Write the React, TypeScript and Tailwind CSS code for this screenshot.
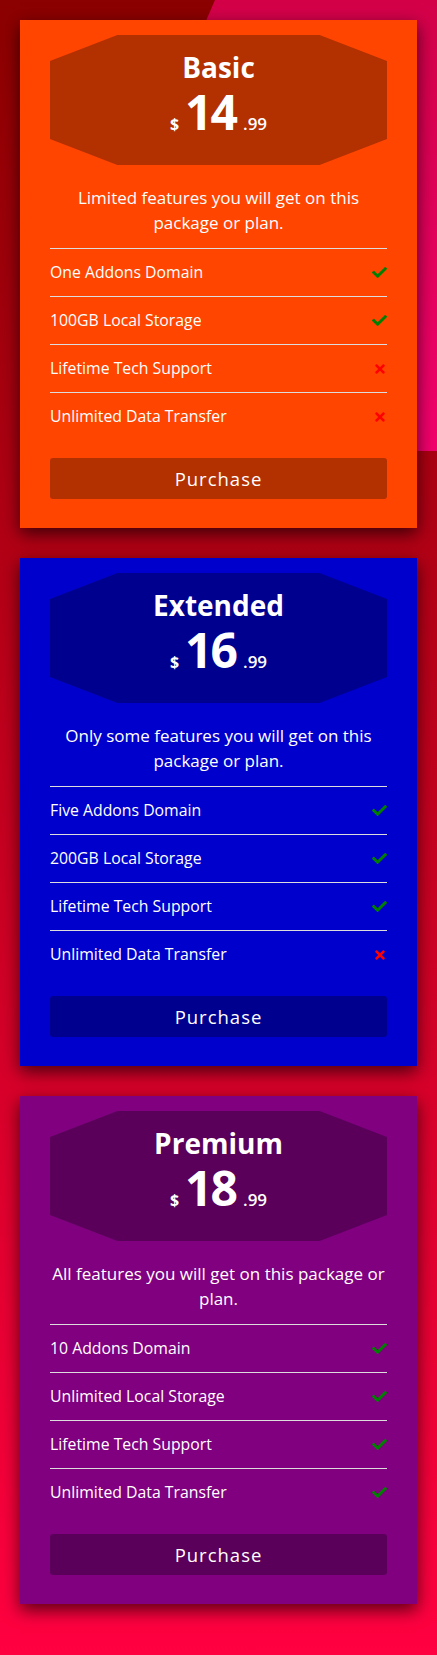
import { FaCheck, FaTimes } from 'react-icons/fa'

type Feature = { label: string; ok: boolean }

type Plan = {
  name: string
  price: string
  desc: string[]
  features: Feature[]
  card: string
  dark: string
}

const plans: Plan[] = [
  {
    name: 'Basic',
    price: '14',
    desc: ['Limited features you will get on this', 'package or plan.'],
    features: [
      { label: 'One Addons Domain', ok: true },
      { label: '100GB Local Storage', ok: true },
      { label: 'Lifetime Tech Support', ok: false },
      { label: 'Unlimited Data Transfer', ok: false },
    ],
    card: 'bg-[#ff4500]',
    dark: 'bg-[#b33000]',
  },
  {
    name: 'Extended',
    price: '16',
    desc: ['Only some features you will get on this', 'package or plan.'],
    features: [
      { label: 'Five Addons Domain', ok: true },
      { label: '200GB Local Storage', ok: true },
      { label: 'Lifetime Tech Support', ok: true },
      { label: 'Unlimited Data Transfer', ok: false },
    ],
    card: 'bg-[#0000cd]',
    dark: 'bg-[#00008f]',
  },
  {
    name: 'Premium',
    price: '18',
    desc: ['All features you will get on this package or', 'plan.'],
    features: [
      { label: '10 Addons Domain', ok: true },
      { label: 'Unlimited Local Storage', ok: true },
      { label: 'Lifetime Tech Support', ok: true },
      { label: 'Unlimited Data Transfer', ok: true },
    ],
    card: 'bg-[#800080]',
    dark: 'bg-[#5a005a]',
  },
]

const PlanCard = ({ plan }: { plan: Plan }) => {
  return (
    <div
      className={`${plan.card} relative px-[30px] pt-[15px] pb-[29px] text-white shadow-[0_6px_16px_rgba(0,0,0,0.65)]`}
    >
      <div
        className={`${plan.dark} h-[130px] pt-[15px] flex flex-col items-center [clip-path:polygon(20%_0,80%_0,100%_20%,100%_80%,80%_100%,20%_100%,0_80%,0_20%)]`}
      >
        <div className="text-[28px] leading-[34px] font-bold">{plan.name}</div>
        <div className="flex items-baseline h-[54px] pt-[2px] leading-[52px]">
          <span className="text-[16px] font-bold mr-[6px]">$</span>
          <span className="text-[48px] font-bold tracking-[-2px]">{plan.price}</span>
          <span className="text-[17px] font-semibold ml-[7px]">.99</span>
        </div>
      </div>

      <p className="mt-5 mb-[13px] text-center text-[17px] leading-[25px]">
        {plan.desc[0]}
        <br />
        {plan.desc[1]}
      </p>

      <ul className="flex flex-col">
        {plan.features.map((f, i) => (
          <li
            key={i}
            className="h-12 flex items-center justify-between border-t border-[#dddddd] text-[15.8px]"
          >
            <span>{f.label}</span>
            {f.ok ? (
              <FaCheck className="text-[#008000]" size={15} />
            ) : (
              <FaTimes className="text-[#ff0000]" size={14} />
            )}
          </li>
        ))}
      </ul>

      <button
        className={`${plan.dark} mt-[18px] w-full h-[41px] rounded-[3px] text-[18.5px] tracking-[1px] text-white`}
      >
        Purchase
      </button>
    </div>
  )
}

export default function App() {
  return (
    <div
      className="relative min-h-screen overflow-hidden bg-[linear-gradient(to_bottom,#8b0000,#ff0040)] px-5 pt-5 pb-[50px]"
      style={{ fontFamily: '"Open Sans", "Noto Sans", sans-serif' }}
    >
      <div className="absolute top-0 left-0 w-full h-[451px] bg-[linear-gradient(to_bottom,#d30048,#f2006c)] [clip-path:polygon(215px_0,100%_0,100%_100%,20px_100%)]" />
      <div className="relative flex flex-col gap-[30px]">
        {plans.map((plan) => (
          <PlanCard key={plan.name} plan={plan} />
        ))}
      </div>
    </div>
  )
}
